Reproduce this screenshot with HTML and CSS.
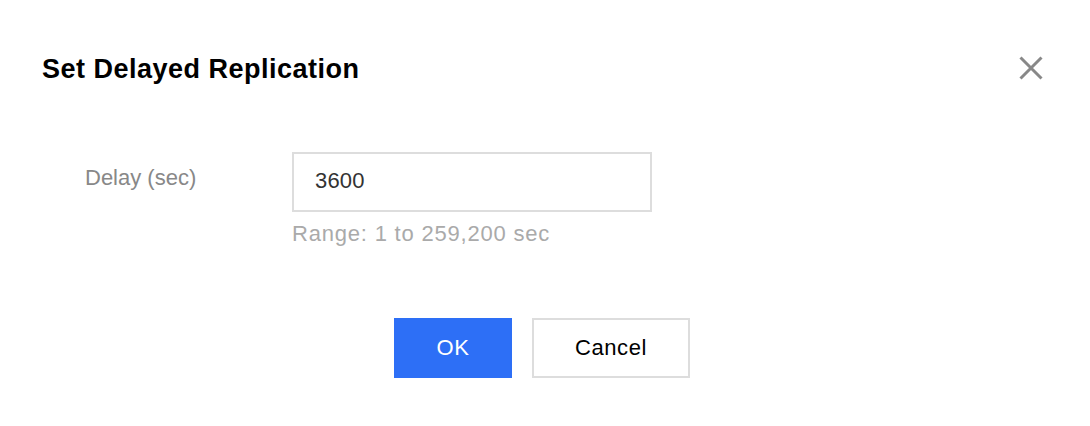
FILE: index.html
```html
<!DOCTYPE html>
<html lang="en">
<head>
<meta charset="utf-8">
<title>Set Delayed Replication</title>
<link rel="stylesheet" href="styles.css">
</head>
<body>
<div class="dialog">
  <div class="header">
    <h2 class="title">Set Delayed Replication</h2>
    <button class="close" aria-label="Close">
      <svg width="24" height="24" viewBox="0 0 24 24"><path d="M1.5 1.5 L22.5 22.5 M22.5 1.5 L1.5 22.5" stroke="#888" stroke-width="3" fill="none"/></svg>
    </button>
  </div>
  <div class="form">
    <div class="row">
      <label class="label">Delay (sec)</label>
      <div class="control">
        <input class="input" type="text" value="3600">
        <div class="help">Range: 1 to 259,200 sec</div>
      </div>
    </div>
  </div>
  <div class="footer">
    <button class="btn primary">OK</button>
    <button class="btn cancel">Cancel</button>
  </div>
</div>
</body>
</html>
```
FILE: styles.css
```css
html, body {
  margin: 0;
  padding: 0;
  background: #fff;
}
body {
  font-family: "Liberation Sans", Arial, Helvetica, sans-serif;
  width: 1090px;
  height: 426px;
  overflow: hidden;
}
.dialog {
  display: flex;
  flex-direction: column;
}
.header {
  display: flex;
  justify-content: space-between;
  align-items: flex-start;
  padding: 53px 47px 0 42px;
}
.title {
  margin: 0;
  font-size: 27px;
  font-weight: 700;
  line-height: 32px;
  letter-spacing: 0.5px;
  color: #000;
}
.close {
  border: 0;
  background: none;
  padding: 0;
  margin-top: 3px;
  width: 24px;
  height: 24px;
  display: flex;
}
.form {
  padding: 67px 0 0 85px;
}
.row {
  display: flex;
}
.label {
  width: 207px;
  font-size: 22px;
  line-height: 30px;
  padding-top: 11px;
  color: #888;
}
.control {
  display: flex;
  flex-direction: column;
}
.input {
  box-sizing: border-box;
  width: 360px;
  height: 60px;
  border: 2px solid #ddd;
  padding: 0 0 2px 21px;
  font-family: inherit;
  font-size: 22px;
  letter-spacing: 0.2px;
  color: #333;
  outline: none;
  margin: 0;
}
.help {
  margin-top: 8px;
  font-size: 22px;
  line-height: 28px;
  letter-spacing: 0.8px;
  color: #aaa;
}
.footer {
  display: flex;
  justify-content: center;
  gap: 20px;
  padding: 70px 6px 0 0;
}
.btn {
  box-sizing: border-box;
  height: 60px;
  padding: 0;
  font-family: inherit;
  font-size: 22px;
  letter-spacing: 0.6px;
  border: 2px solid #ddd;
  background: #fff;
  color: #000;
  margin: 0;
}
.btn.primary {
  width: 118px;
  background: #2d6ff6;
  border-color: #2d6ff6;
  color: #fff;
}
.btn.cancel {
  width: 158px;
}
```
